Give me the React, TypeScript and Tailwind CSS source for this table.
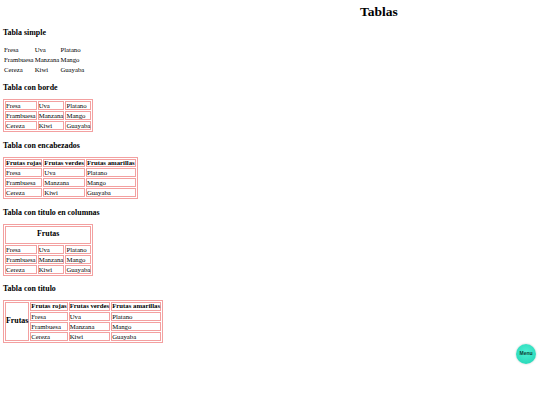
const frutas = [
  ["Fresa", "Uva", "Platano"],
  ["Frambuesa", "Manzana", "Mango"],
  ["Cereza", "Kiwi", "Guayaba"],
];

const headers = ["Frutas rojas", "Frutas verdes", "Frutas amarillas"];

const H3 = ({ children }: { children: string }) => (
  <h3 className="mt-[8.5px] mb-[7px] text-[7.9px] font-bold leading-[9px]">{children}</h3>
);

const td = "border border-[#f3a0a0] p-0 text-left align-middle font-normal leading-[7px]";
const th = "border border-[#f3a0a0] p-0 text-left align-middle font-bold leading-[6.5px]";
const table = "border-separate border-spacing-[1px] border border-[#f3a0a0]";

const Rows = () => (
  <>
    {frutas.map((row) => (
      <tr key={row[0]}>
        {row.map((c) => (
          <td key={c} className={td}>
            {c}
          </td>
        ))}
      </tr>
    ))}
  </>
);

export default function App() {
  return (
    <div className="relative min-h-[405px] w-[540px] bg-white pt-[4px] pl-[3px] font-['Liberation_Serif',serif] text-[6.75px] text-black">
      <h1 className="m-0 pl-[357px] text-[13.5px] font-bold leading-[15px]">Tablas</h1>

      <H3>Tabla simple</H3>
      <table className="border-separate border-spacing-[1px]">
        <tbody>
          {frutas.map((row) => (
            <tr key={row[0]}>
              {row.map((c) => (
                <td key={c} className="p-0 py-[1px] leading-[7px]">
                  {c}
                </td>
              ))}
            </tr>
          ))}
        </tbody>
      </table>

      <H3>Tabla con borde</H3>
      <table className={table}>
        <tbody>
          <Rows />
        </tbody>
      </table>

      <H3>Tabla con encabezados</H3>
      <table className={table}>
        <tbody>
          <tr>
            {headers.map((h) => (
              <th key={h} className={th}>
                {h}
              </th>
            ))}
          </tr>
          <Rows />
        </tbody>
      </table>

      <H3>Tabla con titulo en columnas</H3>
      <table className={table}>
        <tbody>
          <tr>
            <th colSpan={3} className="border border-[#f3a0a0] pt-[2px] pb-[5px] text-center align-top text-[7.9px] font-bold leading-[9px]">
              Frutas
            </th>
          </tr>
          <Rows />
        </tbody>
      </table>

      <H3>Tabla con titulo</H3>
      <table className={table}>
        <tbody>
          <tr>
            <th rowSpan={4} className="border border-[#f3a0a0] p-0 text-[7.9px] font-bold">
              Frutas
            </th>
            {headers.map((h) => (
              <th key={h} className={th}>
                {h}
              </th>
            ))}
          </tr>
          <Rows />
        </tbody>
      </table>

      <button className="absolute right-[4px] top-[344px] flex h-[20px] w-[20px] items-center justify-center rounded-full bg-[radial-gradient(circle_at_50%_40%,#4eefd2,#1fd3b3)] font-['Liberation_Sans',sans-serif] text-[5px] font-bold text-[#0b3b31] shadow-[0_0_2px_rgba(0,0,0,0.25)]">
        Menu
      </button>
    </div>
  );
}
